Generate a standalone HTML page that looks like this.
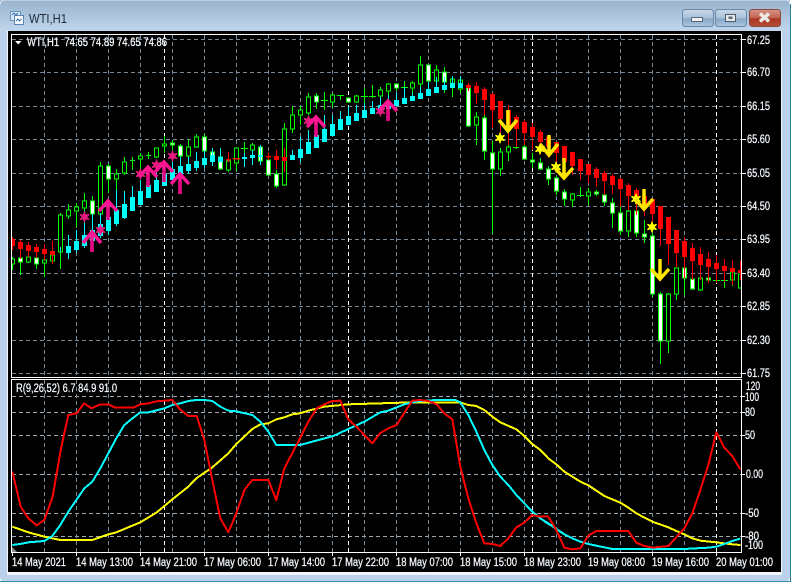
<!DOCTYPE html>
<html><head><meta charset="utf-8"><title>WTI,H1</title>
<style>html,body{margin:0;padding:0;background:#fff;width:793px;height:583px;overflow:hidden}svg{display:block}text{font-family:"Liberation Sans",sans-serif;font-size:11.5px;fill:#fff;stroke:#eaf4ff;stroke-width:.25px}</style></head>
<body>
<svg width="793" height="583" viewBox="0 0 793 583" xmlns="http://www.w3.org/2000/svg">
<defs>
<linearGradient id="tb" x1="0" y1="0" x2="0" y2="1"><stop offset="0" stop-color="#98b3ce"/><stop offset="1" stop-color="#c0d6eb"/></linearGradient>
<linearGradient id="bb" x1="0" y1="0" x2="0" y2="1"><stop offset="0" stop-color="#c8d8e8"/><stop offset=".5" stop-color="#a9c1da"/><stop offset=".55" stop-color="#86a6c6"/><stop offset="1" stop-color="#aac8e4"/></linearGradient>
<linearGradient id="rb" x1="0" y1="0" x2="0" y2="1"><stop offset="0" stop-color="#d8978a"/><stop offset=".5" stop-color="#c2604e"/><stop offset=".55" stop-color="#a83420"/><stop offset="1" stop-color="#b8503c"/></linearGradient>
<clipPath id="mc"><rect x="12" y="35" width="729" height="342"/></clipPath>
<clipPath id="sc"><rect x="12" y="380" width="729" height="172"/></clipPath>
<polygon id="st" points="0,-6 1.5,-2.6 5.2,-3 3,0 5.2,3 1.5,2.6 0,6 -1.5,2.6 -5.2,3 -3,0 -5.2,-3 -1.5,-2.6"/>
</defs>
<!-- window frame -->
<rect x="0" y="0" width="790" height="582" rx="5" fill="#b9d1ea"/>
<rect x="0" y="0" width="790" height="31" fill="url(#tb)"/>
<path d="M0 5Q0 0 5 0H785Q790 0 790 5" fill="none" stroke="#dfe8f0"/>
<rect x="0" y="581" width="790" height="1" fill="#2f8f9f"/>
<rect x="790" y="4" width="1" height="578" fill="#2f7f9f"/>
<rect x="7" y="31" width="775" height="544" fill="#f2f6fa"/>
<rect x="8" y="31" width="773" height="541" fill="#000"/>
<!-- title -->
<g>
<rect x="10.5" y="11.5" width="10" height="9" fill="#d8e8f8" stroke="#6a94c0"/>
<rect x="14.5" y="15.5" width="9" height="9" fill="#f4f8fc" stroke="#5a86b8"/>
<path d="M12 15l2-2 2 2 2-2M16 21l2-2 1.500 2 2-2" fill="none" stroke="#3a6ea8"/>
</g>
<text x="29" y="23" style="font-size:13px;fill:#1c2c3c;stroke:none" textLength="38" lengthAdjust="spacingAndGlyphs">WTI,H1</text>
<!-- buttons -->
<rect x="682.500" y="9.500" width="31" height="17" rx="3" fill="url(#bb)" stroke="#6a87a6"/>
<rect x="691.500" y="17.500" width="11" height="4" fill="#f2f2f2" stroke="#5a6a7a"/>
<rect x="715.500" y="9.500" width="31" height="17" rx="3" fill="url(#bb)" stroke="#6a87a6"/>
<rect x="725.500" y="14.500" width="10" height="7" fill="#e8e8e8" stroke="#4a5a6a"/><rect x="728.500" y="16.500" width="4" height="2.500" fill="#5a6a7a"/>
<rect x="749.500" y="9.500" width="31" height="17" rx="3" fill="url(#rb)" stroke="#8a4a40"/>
<path d="M760 13.500l9 8M769 13.500l-9 8" stroke="#ece8e4" stroke-width="3.500" fill="none"/>
<!-- grid main + sub -->
<g stroke="#778899" stroke-dasharray="4 3" fill="none" shape-rendering="crispEdges">
<path d="M12 39.500H741M12 72.500H741M12 106.500H741M12 139.500H741M12 173.500H741M12 206.500H741M12 239.500H741M12 273.500H741M12 306.500H741M12 340.500H741M12 373.500H741"/>
<path d="M44.500 35V377M76.500 35V377M108.500 35V377M140.500 35V377M172.500 35V377M204.500 35V377M236.500 35V377M268.500 35V377M300.500 35V377M332.500 35V377M364.500 35V377M396.500 35V377M428.500 35V377M460.500 35V377M492.500 35V377M524.500 35V377M556.500 35V377M588.500 35V377M620.500 35V377M652.500 35V377M684.500 35V377"/>
<path d="M12 396.500H741M12 412.500H741M12 435.500H741M12 474.500H741M12 513.500H741M12 536.500H741" stroke="#a0a8b0"/>
<path d="M44.500 380V552M76.500 380V552M108.500 380V552M140.500 380V552M172.500 380V552M204.500 380V552M236.500 380V552M268.500 380V552M300.500 380V552M332.500 380V552M364.500 380V552M396.500 380V552M428.500 380V552M460.500 380V552M492.500 380V552M524.500 380V552M556.500 380V552M588.500 380V552M620.500 380V552M652.500 380V552M684.500 380V552"/>
<path d="M164.500 35V377M348.500 35V377M532.500 35V377M716.500 35V377M164.500 380V552M348.500 380V552M532.500 380V552M716.500 380V552" stroke="#fff"/>
</g>
<g clip-path="url(#mc)" shape-rendering="crispEdges">
<!-- green wicks -->
<path fill="none" stroke="#0f0" d="M12.500 257V270M20.500 258V275M28.500 255V263M36.500 258V269M44.500 260V277M52.500 251V264M60.500 213V269M68.500 204V219M76.500 203V227M84.500 193V217M92.500 196V232M100.500 162V230M108.500 164V193M116.500 169V192M124.500 157V175M132.500 157V170M140.500 153V172M148.500 152V159M156.500 148V158M164.500 136V153M172.500 140V152M180.500 144V158M188.500 139V158M196.500 134V148M204.500 134V152M212.500 150V158M220.500 156V170M228.500 156V172M236.500 148V171M244.500 142V156M252.500 143V153M260.500 146V162M268.500 159V176M276.500 170V188M284.500 123V186M292.500 106V133M300.500 106V125M308.500 93V115M316.500 93V109M324.500 92V110M332.500 93V107M340.500 95V100M348.500 98V103M356.500 95V103M364.500 88V103M372.500 85V98M380.500 87V105M388.500 83V102M396.500 83V91M404.500 81V99M412.500 81V97M420.500 56V89M428.500 65V85M436.500 65V83M444.500 67V93M452.500 76V97M460.500 76V93M468.500 86V127M476.500 112V145M484.500 112V160M492.500 141V234M500.500 148V176M508.500 144V161M516.500 145V149M524.500 145V160M532.500 153V168M540.500 158V170M548.500 166V185M556.500 176V195M564.500 189V206M572.500 193V207M580.500 187V197M588.500 188V205M596.500 190V196M604.500 189V206M612.500 198V228M620.500 200V235M628.500 208V237M636.500 208V237M644.500 220V243M652.500 233V297M660.500 292V364M668.500 293V353M676.500 268V300M684.500 268V295M692.500 278V290M700.500 278V291M708.500 277V283M716.500 280V283M724.500 279V288M732.500 272V286M740.500 274V288"/>
<!-- hollow bodies -->
<path fill="#000" stroke="#0f0" d="M10.500 259h4v5h-4zM26.500 257h4v5h-4zM42.500 260h4v3h-4zM50.500 255h4v6h-4zM58.500 215h4v37h-4zM66.500 210h4v6h-4zM74.500 207h4v4h-4zM82.500 201h4v7h-4zM98.500 166h4v48h-4zM114.500 174h4v5h-4zM122.500 162h4v11h-4zM138.500 156h4v3h-4zM154.500 148h4v9h-4zM162.500 144h4v2h-4zM186.500 147h4v9h-4zM194.500 137h4v10h-4zM226.500 161h4v9h-4zM234.500 148h4v15h-4zM250.500 145h4v5h-4zM282.500 129h4v56h-4zM290.500 115h4v14h-4zM298.500 110h4v5h-4zM306.500 97h4v16h-4zM330.500 95h4v7h-4zM354.500 96h4v6h-4zM378.500 90h4v6h-4zM386.500 84h4v7h-4zM410.500 83h4v5h-4zM418.500 65h4v19h-4zM434.500 70h4v11h-4zM450.500 79h4v5h-4zM458.500 80h4v9h-4zM474.500 117h4v8h-4zM498.500 152h4v17h-4zM506.500 147h4v5h-4zM570.500 194h4v6h-4zM586.500 192h4v4h-4zM626.500 211h4v20h-4zM666.500 294h4v47h-4zM674.500 268h4v26h-4zM698.500 278h4v12h-4zM730.500 272h4v8h-4zM738.500 274h4v14h-4z"/>
<!-- white bodies -->
<path fill="#fff" stroke="#0f0" d="M18.500 258h4v4h-4zM34.500 258h4v6h-4zM90.500 201h4v13h-4zM106.500 166h4v13h-4zM170.500 143h4v2h-4zM178.500 146h4v10h-4zM202.500 137h4v14h-4zM210.500 152h4v5h-4zM218.500 157h4v12h-4zM258.500 147h4v14h-4zM266.500 160h4v15h-4zM274.500 174h4v12h-4zM314.500 96h4v6h-4zM346.500 98h4v4h-4zM394.500 84h4v4h-4zM426.500 65h4v16h-4zM442.500 72h4v10h-4zM466.500 88h4v38h-4zM482.500 118h4v33h-4zM490.500 153h4v16h-4zM522.500 147h4v12h-4zM530.500 160h4v2h-4zM538.500 163h4v6h-4zM546.500 169h4v10h-4zM554.500 178h4v13h-4zM562.500 192h4v7h-4zM594.500 192h4v2h-4zM602.500 195h4v7h-4zM610.500 203h4v10h-4zM618.500 213h4v18h-4zM634.500 211h4v22h-4zM642.500 234h4v3h-4zM650.500 236h4v58h-4zM658.500 294h4v47h-4zM682.500 268h4v10h-4zM690.500 279h4v10h-4zM706.500 278h4v2h-4z"/>
<!-- green doji -->
<path fill="none" stroke="#0f0" d="M130 160.500h5M146 155.500h5M241 148.500h7M321 100.500h7M337 95.500h7M361 96.500h7M369 96.500h7M401 87.500h7M513 147.500h6M577 195.500h7M713 280.500h7M721 280.500h7"/>
<!-- cyan wicks -->
<path fill="none" stroke="#0ff" d="M60.500 247V252M68.500 235V259M76.500 230V253M84.500 222V248M92.500 214V243M100.500 213V238M108.500 203V235M116.500 190V226M124.500 191V219M132.500 186V211M140.500 180V205M148.500 170V198M156.500 166V192M164.500 161V186M172.500 156V180M180.500 157V175M188.500 157V174M196.500 152V171M204.500 150V168M212.500 148V166M220.500 148V162M244.500 153V167M252.500 150V165M260.500 145V165M292.500 150V160M300.500 137V162M308.500 130V154M316.500 120V148M324.500 115V142M332.500 115V136M340.500 111V130M348.500 106V125M356.500 105V121M364.500 103V118M372.500 101V114M380.500 97V113M388.500 95V109M396.500 93V106M404.500 87V104M412.500 93V101M420.500 87V99M428.500 82V96M436.500 77V93M444.500 77V90M452.500 76V88M460.500 76V88"/>
<!-- cyan bodies -->
<path fill="#0ff" d="M66 246h5v7h-5zM74 241h5v9h-5zM82 235h5v11h-5zM90 230h5v11h-5zM98 224h5v12h-5zM106 217h5v14h-5zM114 210h5v14h-5zM122 204h5v14h-5zM130 197h5v14h-5zM138 191h5v14h-5zM146 185h5v13h-5zM154 180h5v12h-5zM162 174h5v12h-5zM170 169h5v11h-5zM178 166h5v9h-5zM186 164h5v7h-5zM194 161h5v7h-5zM202 158h5v7h-5zM210 155h5v7h-5zM218 157h5v5h-5zM242 157h5v2h-5zM250 155h5v3h-5zM258 155h5v2h-5zM290 155h5v5h-5zM298 149h5v9h-5zM306 142h5v12h-5zM314 135h5v13h-5zM322 129h5v13h-5zM330 124h5v12h-5zM338 119h5v11h-5zM346 116h5v9h-5zM354 113h5v8h-5zM362 110h5v8h-5zM370 108h5v6h-5zM378 105h5v8h-5zM386 103h5v6h-5zM394 100h5v6h-5zM402 98h5v6h-5zM410 96h5v5h-5zM418 93h5v6h-5zM426 89h5v7h-5zM434 87h5v6h-5zM442 85h5v5h-5zM450 83h5v5h-5zM458 83h5v5h-5z"/>
<!-- red wicks -->
<path fill="none" stroke="#f00" d="M12.500 237V250M20.500 240V259M28.500 242V257M36.500 244V258M44.500 244V260M52.500 241V264M228.500 152V162M268.500 153V160M276.500 150V169M284.500 148V172M468.500 83V91M476.500 82V104M484.500 87V115M492.500 93V128M500.500 101V134M508.500 105V145M516.500 115V147M524.500 120V145M532.500 123V150M540.500 130V152M548.500 137V158M556.500 142V170M564.500 146V175M572.500 152V175M580.500 159V180M588.500 164V183M596.500 167V187M604.500 171V195M612.500 174V194M620.500 178V207M628.500 183V210M636.500 188V215M644.500 195V216M652.500 199V227M660.500 206V246M668.500 217V265M676.500 230V267M684.500 237V278M692.500 243V280M700.500 247V280M708.500 252V283M716.500 255V283M724.500 259V282M732.500 260V285M740.500 261V280"/>
<!-- red bodies -->
<path fill="#f00" d="M10 239h5v7h-5zM18 242h5v7h-5zM26 245h5v6h-5zM34 247h5v5h-5zM42 249h5v5h-5zM50 251h5v4h-5zM226 159h5v1.500h-5zM233 158h7v1.500h-7zM266 156h5v1.500h-5zM274 156h5v4h-5zM282 157h5v4h-5zM466 85h5v3h-5zM474 86h5v7h-5zM482 89h5v11h-5zM490 94h5v16h-5zM498 101h5v18h-5zM506 110h5v19h-5zM514 117h5v12h-5zM522 122h5v11h-5zM530 127h5v10h-5zM538 132h5v10h-5zM546 137h5v10h-5zM554 142h5v11h-5zM562 146h5v16h-5zM570 152h5v14h-5zM578 159h5v12h-5zM586 164h5v11h-5zM594 169h5v9h-5zM602 173h5v8h-5zM610 176h5v9h-5zM618 179h5v10h-5zM626 185h5v11h-5zM634 190h5v10h-5zM642 196h5v12h-5zM650 199h5v15h-5zM658 206h5v23h-5zM666 217h5v27h-5zM674 230h5v23h-5zM682 241h5v16h-5zM690 248h5v13h-5zM698 254h5v11h-5zM706 259h5v8h-5zM714 263h5v6h-5zM722 266h5v5h-5zM730 268h5v4h-5zM738 270h5v3h-5z"/>
</g>
<!-- pink stars -->
<g fill="#e6197e" shape-rendering="crispEdges">
<use href="#st" x="84.500" y="217"/><use href="#st" x="100.500" y="230"/><use href="#st" x="140.500" y="174"/><use href="#st" x="156.500" y="165"/><use href="#st" x="172.500" y="156"/><use href="#st" x="308.500" y="121"/><use href="#st" x="380.500" y="111"/>
</g>
<!-- pink arrows -->
<g fill="none" stroke="#ff1493" stroke-width="3.500">
<path d="M83 243L92 232 101 243M92 233V252"/>
<path d="M99 211L108 201 117 211M108 202V220"/>
<path d="M139 177L148 167 157 177M148 168V187"/>
<path d="M155 172L164 162 173 172M164 163V182"/>
<path d="M171 184L180 174 189 184M180 175V194"/>
<path d="M307 127L316 117 325 127M316 118V137"/>
<path d="M379 111L388 101 397 111M388 102V121"/>
</g>
<g fill="none" stroke="#d6007a" stroke-width="1.500">
<path d="M92 240V252M108 208V220M148 175V187M164 170V182M180 182V194M316 125V137M388 109V121"/>
</g>
<!-- yellow stars -->
<g fill="#ffff00" shape-rendering="crispEdges">
<use href="#st" x="500" y="138"/><use href="#st" x="540" y="149"/><use href="#st" x="556" y="167"/><use href="#st" x="636" y="199"/><use href="#st" x="652" y="227"/>
</g>
<!-- yellow arrows -->
<g fill="none" stroke="#ffe600" stroke-width="3.500">
<path d="M499 120L508 131 517 120M508 110V130"/>
<path d="M540 144L549 155 558 144M549 135V154"/>
<path d="M555 168L564 178 573 168M564 158V177"/>
<path d="M635 199L644 209 653 199M644 189V208"/>
<path d="M651 269L660 279 669 269M660 259V278"/>
</g>
<!-- indicator lines -->
<g clip-path="url(#sc)" fill="none" stroke-width="6" stroke-linejoin="round" shape-rendering="crispEdges">
<g transform="translate(0 370) scale(.33333)">
<polyline stroke="#ff0" points="37,470 85,487 133,500 181,510 277,510 325,493 349,487 421,457 469,428 517,388 565,350 589,325 637,292 685,250 709,222 757,177 781,163 805,160 829,148 853,142 877,133 900,130"/>
<polyline stroke="#0ff" points="37,525 60,522 85,517 133,513 157,498 181,465 205,425 229,390 253,355 277,335 301,295 325,250 349,205 373,165 397,145 421,127 445,127 493,115 517,105 541,100 565,93 589,90 613,90 637,93 661,110 685,122 709,124 757,135 781,155 805,185 829,225 900,225"/>
<polyline stroke="#f00" points="37,305 62,410 85,445 110,466 133,450 158,380 182,240 205,135 230,130 252,100 275,115 300,103 325,103 345,113 400,113 421,103 445,100 470,94 517,90 540,118 565,138 590,138 613,210 637,330 661,445 685,487 709,430 733,360 757,330 805,330 829,390 853,295 900,205"/>
</g>
<g transform="translate(300 370) scale(.33333)">
<polyline stroke="#ff0" points="0,130 25,122 73,110 145,103 241,100 337,97 433,97 481,97 505,105 529,108 553,120 577,140 601,157 649,178 673,198 697,222 721,240 750,270"/>
<polyline stroke="#0ff" points="0,225 100,198 145,177 193,155 241,127 265,122 313,103 337,97 361,93 409,90 465,90 481,97 505,135 529,185 553,240 577,285 601,320 625,345 649,375 673,400 697,425 721,445 750,465"/>
<polyline stroke="#f00" points="0,205 25,155 50,115 73,103 97,93 121,92 145,148 169,170 193,195 217,220 240,190 265,175 290,165 315,125 337,92 360,90 385,93 410,103 433,130 457,148 481,290 505,385 529,460 553,520 577,522 601,528 625,505 649,472 673,458 697,435 721,440 745,440"/>
</g>
<g transform="translate(540 370) scale(.33333)">
<polyline stroke="#ff0" points="0,240 25,265 49,283 73,305 97,320 121,335 145,346 193,378 241,398 265,413 289,430 337,455 385,472 409,483 433,493 457,505 481,512 529,517 577,523 601,525"/>
<polyline stroke="#0ff" points="0,445 25,460 49,477 73,493 97,505 121,515 145,522 193,532 217,537 433,537 505,533 529,530 553,522 577,513 601,506"/>
<polyline stroke="#f00" points="25,440 49,480 73,533 97,538 121,535 145,497 169,483 265,483 289,518 313,528 337,533 385,528 433,475 457,430 481,360 505,285 529,187 553,233 577,258 601,298"/>
</g>
</g>
<polygon points="12,547 12,552 17,552" fill="#8a8a8a"/>
<!-- chart borders and ticks -->
<g fill="none" stroke="#fff" shape-rendering="crispEdges">
<rect x="11.500" y="34.500" width="730" height="343"/>
<rect x="11.500" y="379.500" width="730" height="173"/>
<path d="M742 39.500h4M742 72.500h4M742 106.500h4M742 139.500h4M742 173.500h4M742 206.500h4M742 239.500h4M742 273.500h4M742 306.500h4M742 340.500h4M742 373.500h4"/>
<path d="M742 396.500h3M742 412.500h3M742 435.500h3M742 474.500h3M742 513.500h3M742 536.500h3"/>
<path d="M12.500 553v3M76.500 553v3M140.500 553v3M204.500 553v3M268.500 553v3M332.500 553v3M396.500 553v3M460.500 553v3M524.500 553v3M588.500 553v3M652.500 553v3M716.500 553v3"/>
</g>
<polygon points="15,41 21.500,41 18.200,44.500" fill="#fff"/>
<text x="27" y="46" textLength="140" lengthAdjust="spacingAndGlyphs">WTI,H1&#160; 74.65 74.89 74.65 74.86</text>
<text x="16" y="392" textLength="101" lengthAdjust="spacingAndGlyphs">R(9,26,52) 6.7 84.9 91.0</text>
<!-- price labels -->
<g>
<text x="747" y="44" textLength="23" lengthAdjust="spacingAndGlyphs">67.25</text>
<text x="747" y="76" textLength="23" lengthAdjust="spacingAndGlyphs">66.70</text>
<text x="747" y="110" textLength="23" lengthAdjust="spacingAndGlyphs">66.15</text>
<text x="747" y="143" textLength="23" lengthAdjust="spacingAndGlyphs">65.60</text>
<text x="747" y="177" textLength="23" lengthAdjust="spacingAndGlyphs">65.05</text>
<text x="747" y="210" textLength="23" lengthAdjust="spacingAndGlyphs">64.50</text>
<text x="747" y="243" textLength="23" lengthAdjust="spacingAndGlyphs">63.95</text>
<text x="747" y="277" textLength="23" lengthAdjust="spacingAndGlyphs">63.40</text>
<text x="747" y="310" textLength="23" lengthAdjust="spacingAndGlyphs">62.85</text>
<text x="747" y="344" textLength="23" lengthAdjust="spacingAndGlyphs">62.30</text>
<text x="747" y="377" textLength="23" lengthAdjust="spacingAndGlyphs">61.75</text>
<text x="746" y="390" textLength="14" lengthAdjust="spacingAndGlyphs">120</text>
<text x="745" y="401" textLength="14" lengthAdjust="spacingAndGlyphs">100</text>
<text x="745" y="416" textLength="10" lengthAdjust="spacingAndGlyphs">80</text>
<text x="745" y="439" textLength="10" lengthAdjust="spacingAndGlyphs">50</text>
<text x="746" y="478" textLength="17" lengthAdjust="spacingAndGlyphs">0.00</text>
<text x="745" y="517" textLength="14" lengthAdjust="spacingAndGlyphs">-50</text>
<text x="745" y="540" textLength="14" lengthAdjust="spacingAndGlyphs">-80</text>
<text x="745" y="549" textLength="18" lengthAdjust="spacingAndGlyphs">-100</text>
</g>
<!-- time labels -->
<g>
<text x="12" y="566" textLength="54" lengthAdjust="spacingAndGlyphs">14 May 2021</text>
<text x="76" y="566" textLength="57" lengthAdjust="spacingAndGlyphs">14 May 13:00</text>
<text x="140" y="566" textLength="57" lengthAdjust="spacingAndGlyphs">14 May 21:00</text>
<text x="204" y="566" textLength="57" lengthAdjust="spacingAndGlyphs">17 May 06:00</text>
<text x="268" y="566" textLength="57" lengthAdjust="spacingAndGlyphs">17 May 14:00</text>
<text x="332" y="566" textLength="57" lengthAdjust="spacingAndGlyphs">17 May 22:00</text>
<text x="396" y="566" textLength="57" lengthAdjust="spacingAndGlyphs">18 May 07:00</text>
<text x="460" y="566" textLength="57" lengthAdjust="spacingAndGlyphs">18 May 15:00</text>
<text x="524" y="566" textLength="57" lengthAdjust="spacingAndGlyphs">18 May 23:00</text>
<text x="588" y="566" textLength="57" lengthAdjust="spacingAndGlyphs">19 May 08:00</text>
<text x="652" y="566" textLength="57" lengthAdjust="spacingAndGlyphs">19 May 16:00</text>
<text x="716" y="566" textLength="57" lengthAdjust="spacingAndGlyphs">20 May 01:00</text>
</g>
</svg>
</body></html>
